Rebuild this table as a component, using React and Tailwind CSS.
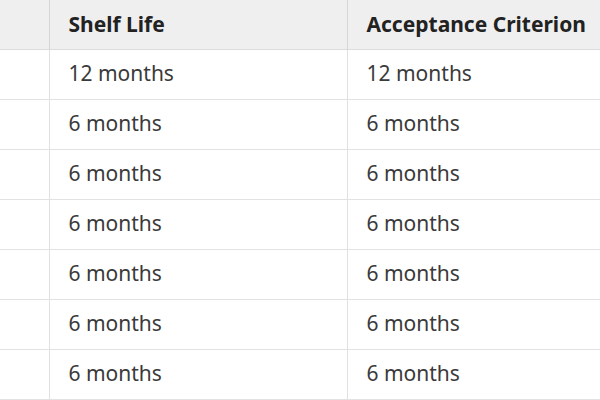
const rows = ['12 months', '6 months', '6 months', '6 months', '6 months', '6 months', '6 months', '6 months'];

export default function App() {
  return (
    <div className="w-[600px] h-[400px] overflow-hidden bg-white" style={{ fontFamily: '"Noto Sans", "Open Sans", sans-serif' }}>
      <table className="border-collapse table-fixed w-[680px] text-[21px]">
        <colgroup>
          <col className="w-[49px]" />
          <col className="w-[298px]" />
          <col className="w-[333px]" />
        </colgroup>
        <thead>
          <tr className="h-[49px] bg-[#efefef] border-b border-[#dcdcdc]">
            <th className="border-r border-[#d6d6d6]"></th>
            <th className="text-left font-bold text-[#222] pl-[19px] border-r border-[#d6d6d6]">Shelf Life</th>
            <th className="text-left font-bold text-[#222] pl-[19px]">Acceptance Criterion</th>
          </tr>
        </thead>
        <tbody>
          {rows.map((r, i) => (
            <tr key={i} className="h-[50px] border-b border-[#e2e2e2]">
              <td className="border-r border-[#e0e0e0]"></td>
              <td className="text-[#3a3a3a] pl-[19px] border-r border-[#e0e0e0]">{r}</td>
              <td className="text-[#3a3a3a] pl-[19px]">{r}</td>
            </tr>
          ))}
        </tbody>
      </table>
    </div>
  );
}
